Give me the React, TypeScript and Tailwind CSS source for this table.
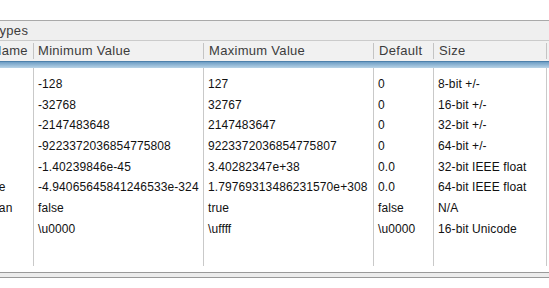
const ROWS = [
  { name: "byte", min: "-128", max: "127", def: "0", size: "8-bit +/-" },
  { name: "short", min: "-32768", max: "32767", def: "0", size: "16-bit +/-" },
  { name: "int", min: "-2147483648", max: "2147483647", def: "0", size: "32-bit +/-" },
  { name: "long", min: "-9223372036854775808", max: "9223372036854775807", def: "0", size: "64-bit +/-" },
  { name: "float", min: "-1.40239846e-45", max: "3.40282347e+38", def: "0.0", size: "32-bit IEEE float" },
  { name: "double", min: "-4.94065645841246533e-324", max: "1.79769313486231570e+308", def: "0.0", size: "64-bit IEEE float" },
  { name: "boolean", min: "false", max: "true", def: "false", size: "N/A" },
  { name: "char", min: "\\u0000", max: "\\uffff", def: "\\u0000", size: "16-bit Unicode" },
];

const cell = "border-r border-[#c9c9c9] pl-[4px] whitespace-nowrap overflow-hidden";

function SpacerRow({ className }: { className: string }) {
  return (
    <div className={`flex ${className}`}>
      <div className="w-[69px] border-r border-[#c9c9c9]" />
      <div className="w-[170px] border-r border-[#c9c9c9]" />
      <div className="w-[170px] border-r border-[#c9c9c9]" />
      <div className="w-[60px] border-r border-[#c9c9c9]" />
      <div className="w-[113px] border-r border-[#c9c9c9]" />
    </div>
  );
}

export default function App() {
  return (
    <div
      className="w-[549px] h-[288px] bg-white overflow-hidden"
      style={{ fontFamily: '"Liberation Sans", Arial, sans-serif' }}
    >
      <div className="h-[20px]" />
      <div className="ml-[-35px] w-[590px]">
        {/* title bar */}
        <div className="h-[21px] border-t border-[#a9a9a9] bg-[#efefef] border-b border-b-[#cbcbcb] pl-[27px] text-[13px] leading-[19px] tracking-[0.3px] text-[#3c3c3c]">
          Types
        </div>

        {/* column headers */}
        <div className="flex h-[20px] bg-[#f1f1f1] text-[13px] tracking-[0.3px] text-[#3c3c3c]">
          <div className="w-[69px] border-r border-[#c4c4c4] pl-[27px] my-[2px] leading-[16px]">Name</div>
          <div className="w-[170px] border-r border-[#c4c4c4] pl-[4px] my-[2px] leading-[16px]">Minimum Value</div>
          <div className="w-[170px] border-r border-[#c4c4c4] pl-[5px] my-[2px] leading-[16px]">Maximum Value</div>
          <div className="w-[60px] border-r border-[#c4c4c4] pl-[5px] my-[2px] leading-[16px]">Default</div>
          <div className="w-[113px] border-r border-[#c4c4c4] pl-[5px] my-[2px] leading-[16px]">Size</div>
        </div>

        {/* selection band */}
        <div className="h-[7px] border-t border-[#4e81ab] bg-gradient-to-b from-[#6d9dc4] to-[#b9d4e7]" />

        {/* body */}
        <div className="flex flex-col h-[198px] text-[12px] text-[#111] tracking-[0.1px]">
          <SpacerRow className="h-[6px] shrink-0" />
          {ROWS.map((r) => (
            <div key={r.name} className="flex h-[20.7px] leading-[20.7px] shrink-0">
              <div className={`w-[69px] ${cell}`}>{r.name}</div>
              <div className={`w-[170px] ${cell}`}>{r.min}</div>
              <div className={`w-[170px] ${cell}`}>{r.max}</div>
              <div className={`w-[60px] ${cell}`}>{r.def}</div>
              <div className={`w-[113px] ${cell}`}>{r.size}</div>
            </div>
          ))}
          <SpacerRow className="flex-1" />
        </div>

        {/* bottom frame */}
        <div className="h-[6px]" />
        <div className="h-[6px] border-y border-[#9a9a9a] bg-[#ececec]" />
      </div>
    </div>
  );
}
